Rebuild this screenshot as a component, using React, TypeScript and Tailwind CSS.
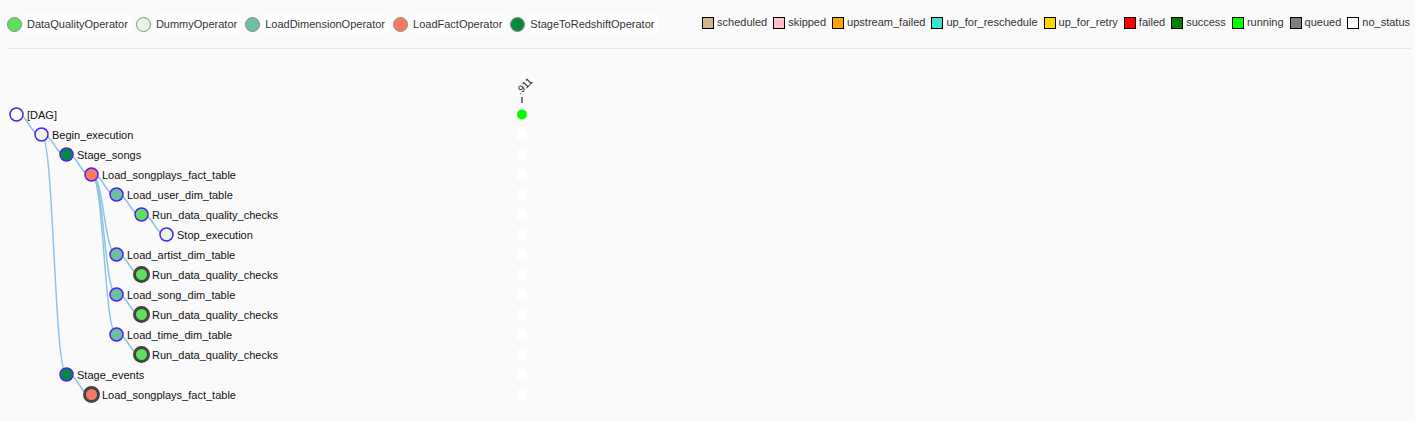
import React from 'react'

type Op = { name: string; color: string }

const operators: Op[] = [
  { name: 'DataQualityOperator', color: '#5fe05a' },
  { name: 'DummyOperator', color: '#e6f7e4' },
  { name: 'LoadDimensionOperator', color: '#69c19f' },
  { name: 'LoadFactOperator', color: '#f87a62' },
  { name: 'StageToRedshiftOperator', color: '#05893f' },
]

const states = [
  { name: 'scheduled', color: '#d2b48c' },
  { name: 'skipped', color: '#ffc0cb' },
  { name: 'upstream_failed', color: '#ffa500' },
  { name: 'up_for_reschedule', color: '#40e0d0' },
  { name: 'up_for_retry', color: '#ffd700' },
  { name: 'failed', color: '#ff0000' },
  { name: 'success', color: '#008000' },
  { name: 'running', color: '#00ff00' },
  { name: 'queued', color: '#808080' },
  { name: 'no_status', color: '#ffffff' },
]

type TreeNode = {
  label: string
  depth: number
  parent: number | null
  fill: string
  seen?: boolean
}

// rows in display order, parent is row index
const nodes: TreeNode[] = [
  { label: '[DAG]', depth: 0, parent: null, fill: '#ffffff' },
  { label: 'Begin_execution', depth: 1, parent: 0, fill: '#e6f7e4' },
  { label: 'Stage_songs', depth: 2, parent: 1, fill: '#05893f' },
  { label: 'Load_songplays_fact_table', depth: 3, parent: 2, fill: '#f87a62' },
  { label: 'Load_user_dim_table', depth: 4, parent: 3, fill: '#69c19f' },
  { label: 'Run_data_quality_checks', depth: 5, parent: 4, fill: '#5fe05a' },
  { label: 'Stop_execution', depth: 6, parent: 5, fill: '#e6f7e4' },
  { label: 'Load_artist_dim_table', depth: 4, parent: 3, fill: '#69c19f' },
  { label: 'Run_data_quality_checks', depth: 5, parent: 7, fill: '#5fe05a', seen: true },
  { label: 'Load_song_dim_table', depth: 4, parent: 3, fill: '#69c19f' },
  { label: 'Run_data_quality_checks', depth: 5, parent: 9, fill: '#5fe05a', seen: true },
  { label: 'Load_time_dim_table', depth: 4, parent: 3, fill: '#69c19f' },
  { label: 'Run_data_quality_checks', depth: 5, parent: 11, fill: '#5fe05a', seen: true },
  { label: 'Stage_events', depth: 2, parent: 1, fill: '#05893f' },
  { label: 'Load_songplays_fact_table', depth: 3, parent: 13, fill: '#f87a62', seen: true },
]

const X0 = 16.5
const Y0 = 65.5
const DX = 25
const DY = 20
const SQ_X = 522

const pos = (i: number) => ({ x: X0 + nodes[i].depth * DX, y: Y0 + i * DY })

function Legend() {
  return (
    <div className="ml-[7px] mr-[4px] h-[49px] flex items-center justify-between border-b border-[#e8e8e8]">
      <div className="flex items-center">
        {operators.map((op, i) => (
          <div key={op.name} className={`flex items-center ${i > 0 ? 'ml-[4px]' : ''}`}>
            <span
              className="w-[15px] h-[15px] rounded-full border border-[#8a8a8a] box-border"
              style={{ backgroundColor: op.color }}
            />
            <span className="ml-[1px] h-[18px] px-[4px] flex items-center bg-white rounded-[4px] text-[11px] text-[#333]">
              {op.name}
            </span>
          </div>
        ))}
      </div>
      <div className="flex items-center -mt-[3px] mr-[1px]">
        {states.map((s, i) => (
          <div key={s.name} className={`flex items-center ${i > 0 ? 'ml-[6px]' : ''}`}>
            <span
              className="w-[12px] h-[12px] border border-black box-border"
              style={{ backgroundColor: s.color }}
            />
            <span className="ml-[3px] text-[11px] text-[#333] leading-none">{s.name}</span>
          </div>
        ))}
      </div>
    </div>
  )
}

function Tree() {
  return (
    <svg width="700" height="372" className="block">
      {nodes.map((n, i) => {
        if (n.parent === null) return null
        const p = pos(n.parent)
        const c = pos(i)
        const m = (p.x + c.x) / 2
        return (
          <path
            key={`l${i}`}
            d={`M${p.x},${p.y} C${m},${p.y} ${m},${c.y} ${c.x},${c.y}`}
            fill="none"
            stroke="#8ec4e6"
            strokeWidth="1.5"
          />
        )
      })}
      {nodes.map((n, i) => {
        const c = pos(i)
        return (
          <g key={`n${i}`}>
            <circle
              cx={c.x}
              cy={c.y}
              r={n.seen ? 7 : 6.5}
              fill={n.fill}
              stroke={n.seen ? '#444444' : '#4f1ff5'}
              strokeWidth={n.seen ? 3 : 1.5}
            />
            <text x={c.x + 10.5} y={c.y + 4} fontSize="11" fill="#111">
              {n.label}
            </text>
          </g>
        )
      })}

      {/* run column */}
      <line x1={SQ_X} y1="48" x2={SQ_X} y2="54" stroke="#000" strokeWidth="1" />
      <text x={SQ_X - 2} y="46" fontSize="10" fill="#111" transform={`rotate(-45 ${SQ_X - 2} 46)`}>
        .911
      </text>
      <circle cx={SQ_X} cy={Y0} r="5" fill="#00ff00" />
      {nodes.slice(1).map((_, i) => (
        <rect key={`s${i}`} x={SQ_X - 5} y={Y0 + (i + 1) * DY - 5} width="10" height="10" fill="#ffffff" />
      ))}
    </svg>
  )
}

export default function App() {
  return (
    <div className="w-[1415px] h-[421px] bg-[#fafafa] overflow-hidden font-['Liberation_Sans',Arial,sans-serif]">
      <Legend />
      <Tree />
    </div>
  )
}
